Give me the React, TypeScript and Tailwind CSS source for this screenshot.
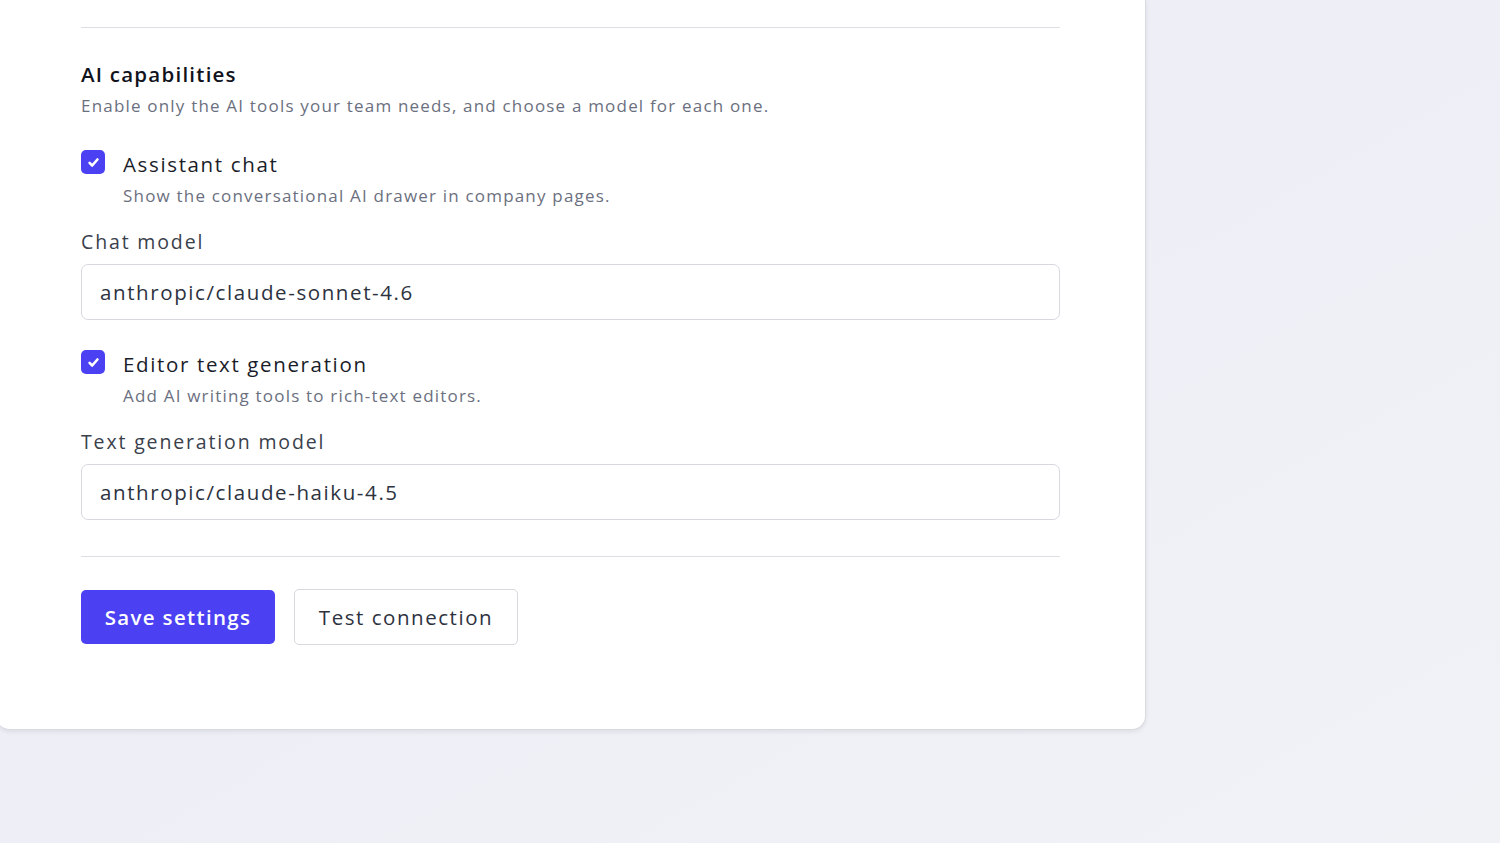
import React from 'react';

const font = { fontFamily: '"Open Sans", "Noto Sans", sans-serif' };

function Check() {
  return (
    <span className="flex h-6 w-6 shrink-0 items-center justify-center rounded-[5px] bg-[#4b41f2]">
      <svg viewBox="0 0 16 16" className="h-[15px] w-[15px]" fill="none">
        <path d="M3.8 8.4l2.8 2.8 5.6-6.4" stroke="white" strokeWidth="2.8" strokeLinecap="round" strokeLinejoin="round" />
      </svg>
    </span>
  );
}

function Capability({
  title,
  desc,
  label,
  value,
}: {
  title: string;
  desc: string;
  label: string;
  value: string;
}) {
  return (
    <div>
      <div className="flex items-start gap-[18px]">
        <Check />
        <div>
          <div className="text-[20.5px] leading-[28px] font-medium tracking-[0.08em] text-[#1a1d29]">{title}</div>
          <div className="mt-[6px] text-[17px] leading-[24px] tracking-[0.07em] text-[#6b7080]">{desc}</div>
        </div>
      </div>
      <label className="mt-[20px] block text-[19.5px] leading-[28px] tracking-[0.095em] text-[#3a3f4c]">{label}</label>
      <div className="mt-[8px] flex h-[56px] items-center rounded-[7px] border border-[#d7d9de] bg-white px-[18px] text-[20.5px] tracking-[0.078em] text-[#2d3240]">
        {value}
      </div>
    </div>
  );
}

export default function App() {
  return (
    <div
      className="min-h-screen w-full overflow-hidden bg-gradient-to-br from-[#eae9f7] via-[#eeeff6] to-[#f1f2f6]"
      style={font}
    >
      <div className="-ml-[4px] w-[1150px] rounded-b-[14px] border-r border-b border-[#d9dbe1] bg-white px-[85px] pb-[84px] pt-[27px] shadow-[0_2px_4px_rgba(15,23,42,0.08)]">
        <div className="border-t border-[#dcdee3]" />

        <h2 className="mt-[32px] text-[20.5px] leading-[28px] font-semibold tracking-[0.06em] text-[#11131c]">
          AI capabilities
        </h2>
        <p className="mt-[6px] text-[17px] leading-[24px] tracking-[0.07em] text-[#6b7080]">
          Enable only the AI tools your team needs, and choose a model for each one.
        </p>

        <div className="mt-[32px]">
          <Capability
            title="Assistant chat"
            desc="Show the conversational AI drawer in company pages."
            label="Chat model"
            value="anthropic/claude-sonnet-4.6"
          />
        </div>
        <div className="mt-[30px]">
          <Capability
            title="Editor text generation"
            desc="Add AI writing tools to rich-text editors."
            label="Text generation model"
            value="anthropic/claude-haiku-4.5"
          />
        </div>

        <div className="mt-[36px] border-t border-[#dcdee3]" />

        <div className="mt-[32px] flex items-center gap-[19px]">
          <button className="h-[54px] w-[194px] rounded-[5px] bg-[#4b41f2] text-[20.5px] font-semibold tracking-[0.065em] text-white">
            Save settings
          </button>
          <button className="h-[56px] w-[224px] rounded-[5px] border border-[#d7d9de] bg-white text-[20.5px] tracking-[0.075em] text-[#2d3240]">
            Test connection
          </button>
        </div>
      </div>
    </div>
  );
}
